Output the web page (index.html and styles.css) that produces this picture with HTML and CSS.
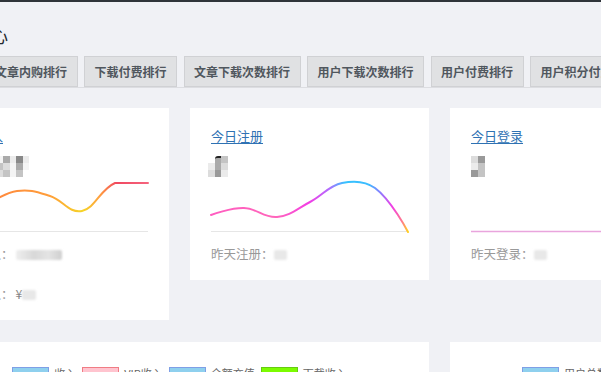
FILE: index.html
```html
<!DOCTYPE html>
<html lang="zh-CN">
<head>
<meta charset="utf-8">
<title>数据中心</title>
<link rel="stylesheet" href="styles.css">
</head>
<body>
<div class="adminbar"></div>
<div class="wrap">
  <h1 class="title">数据中心</h1>
  <nav class="tabs">
    <a class="tab" href="#">概况</a>
    <a class="tab" href="#">文章内购排行</a>
    <a class="tab" href="#">下载付费排行</a>
    <a class="tab" href="#">文章下载次数排行</a>
    <a class="tab" href="#">用户下载次数排行</a>
    <a class="tab" href="#">用户付费排行</a>
    <a class="tab" href="#">用户积分付费排行</a>
  </nav>

  <section class="stats">
    <article class="card">
      <a class="card-link" href="#">今日收入</a>
      <div class="mosaic mosaic-12">
        <i class="s3"></i><i class="s1"></i><i class="s4"></i><i class="s2"></i><i class="s3"></i><i class="s1"></i><i class="s4"></i><i class="s6"></i><i class="s2"></i><i class="s5"></i><i class="d1"></i><i class="s5"></i>
        <i class="s4"></i><i class="s2"></i><i class="s3"></i><i class="s1"></i><i class="s4"></i><i class="s2"></i><i class="s5"></i><i class="s3"></i><i class="s4"></i><i class="s6"></i><i class="s2"></i><i class="s6"></i>
        <i class="s5"></i><i class="s3"></i><i class="s5"></i><i class="s4"></i><i class="s2"></i><i class="s5"></i><i class="s3"></i><i class="s4"></i><i class="s3"></i><i class="s6"></i><i class="s3"></i><i class="s0"></i>
      </div>
      <svg class="spark" viewBox="0 0 197 56" width="197" height="56">
        <defs>
          <linearGradient id="g1" gradientUnits="userSpaceOnUse" x1="0" y1="0" x2="197" y2="0">
            <stop offset="0" stop-color="#ff7f45"/>
            <stop offset="0.25" stop-color="#ff8a3d"/>
            <stop offset="0.5" stop-color="#ff9e3a"/>
            <stop offset="0.67" stop-color="#f6d527"/>
            <stop offset="0.76" stop-color="#ff9a40"/>
            <stop offset="0.84" stop-color="#f04860"/>
            <stop offset="1" stop-color="#f5647e"/>
          </linearGradient>
        </defs>
        <line x1="0" y1="54.5" x2="197" y2="54.5" class="base"/>
        <path d="M0,38 C0,38 19.8,32.8 33,28 C46.2,23.2 52.8,15.8 66,14 C79.2,12.2 86,15 99,19 C112,23 118,36.6 131,34 C144,31.4 149,12.4 164,6 C175.4,6 197,6 197,6" class="line" stroke="url(#g1)"/>
      </svg>
      <p class="meta">昨天收入：<span class="blur blur-wide"></span></p>
      <p class="meta">累计收入：<span class="yen">¥</span><span class="blur blur-short"></span></p>
    </article>

    <article class="card">
      <a class="card-link" href="#">今日注册</a>
      <div class="mosaic mosaic-3 shift">
        <i class="s0"></i><i class="s2 mark"></i><i class="s3"></i>
        <i class="s5"></i><i class="s2"></i><i class="s4"></i>
        <i class="s4"></i><i class="s1"></i><i class="s5"></i>
      </div>
      <svg class="spark" viewBox="0 0 197 56" width="197" height="56">
        <defs>
          <linearGradient id="g2" gradientUnits="userSpaceOnUse" x1="0" y1="0" x2="197" y2="0">
            <stop offset="0" stop-color="#ff5cc0"/>
            <stop offset="0.33" stop-color="#ff66bb"/>
            <stop offset="0.5" stop-color="#f23de5"/>
            <stop offset="0.6" stop-color="#b06cff"/>
            <stop offset="0.68" stop-color="#36c2ff"/>
            <stop offset="0.8" stop-color="#3cbcff"/>
            <stop offset="0.86" stop-color="#8a7cff"/>
            <stop offset="0.92" stop-color="#f23de5"/>
            <stop offset="0.97" stop-color="#ff7a8a"/>
            <stop offset="1" stop-color="#ffd21f"/>
          </linearGradient>
        </defs>
        <line x1="0" y1="54.5" x2="197" y2="54.5" class="base"/>
        <path d="M0,38 C0,38 19.8,30.6 33,31 C46.2,31.4 52.8,41.2 66,40 C79.2,38.8 86,31.8 99,25 C112,18.2 117.3,8.9 131,6 C143.3,3.4 154,3.6 164,11 C180.4,23.2 197,55 197,55" class="line" stroke="url(#g2)"/>
      </svg>
      <p class="meta">昨天注册：<span class="blur blur-tiny"></span></p>
    </article>

    <article class="card">
      <a class="card-link" href="#">今日登录</a>
      <div class="mosaic mosaic-2">
        <i class="s4"></i><i class="s1"></i>
        <i class="s5"></i><i class="s3"></i>
        <i class="s1"></i><i class="s3"></i>
      </div>
      <svg class="spark" viewBox="0 0 197 56" width="197" height="56">
        <line x1="0" y1="54.5" x2="197" y2="54.5" class="base"/>
        <line x1="0" y1="54.5" x2="197" y2="54.5" class="flat"/>
      </svg>
      <p class="meta">昨天登录：<span class="blur blur-tiny"></span></p>
    </article>
  </section>

  <section class="charts">
    <article class="card chart-card">
      <ul class="legend">
        <li><span class="swatch sw-blue"></span>收入</li>
        <li><span class="swatch sw-pink"></span>VIP收入</li>
        <li><span class="swatch sw-blue"></span>余额充值</li>
        <li><span class="swatch sw-lime"></span>下载收入</li>
      </ul>
    </article>
    <article class="card chart-card">
      <ul class="legend legend-shift">
        <li><span class="swatch sw-blue"></span>用户总数</li>
      </ul>
    </article>
  </section>
</div>
</body>
</html>
```

FILE: styles.css
```css
html, body {
  margin: 0;
  padding: 0;
}

body {
  width: 601px;
  height: 372px;
  overflow: hidden;
  background: #f0f1f5;
  font-family: "Noto Sans CJK SC", "Noto Sans", "Liberation Sans", sans-serif;
  color: #23282d;
}

.adminbar {
  height: 2px;
  background: #2f3439;
}

.wrap {
  margin-left: -70px;
  width: 780px;
}

.title {
  margin: 24px 0 12px 6px;
  font-size: 18px;
  line-height: 18px;
  font-weight: 400;
  color: #23282d;
}

.tabs {
  display: flex;
  gap: 6.5px;
  padding-left: 3px;
  border-bottom: 1px solid #dcdde1;
}

.tab {
  flex: none;
  padding: 0 9.5px;
  border: 1px solid #d0d1d4;
  background: #e0e1e3;
  color: #50575e;
  font-size: 12px;
  font-weight: 700;
  line-height: 29px;
  text-decoration: none;
  white-space: nowrap;
}

.stats {
  display: grid;
  grid-template-columns: repeat(3, 239px);
  gap: 21px;
  margin-top: 20px;
  align-items: start;
}

.card {
  background: #fff;
  padding: 20px 21px 16px;
}

.card-link {
  display: block;
  width: fit-content;
  font-size: 13px;
  line-height: 16px;
  color: #2f72b3;
  text-decoration: underline;
  text-underline-offset: 2px;
}

.mosaic {
  display: grid;
  grid-template-rows: repeat(3, 7px);
  margin-top: 12px;
  height: 21px;
}

.mosaic-12 { grid-template-columns: repeat(12, 6.5px); }
.mosaic-3 { grid-template-columns: repeat(3, 6.5px); }
.mosaic-2 { grid-template-columns: repeat(2, 7px); }
.shift { margin-left: -3px; }

.mosaic i { display: block; }
.s0 { background: #ffffff; }
.s1 { background: #999999; }
.s2 { background: #aaaaaa; }
.s3 { background: #c4c4c4; }
.s4 { background: #dcdcdc; }
.s5 { background: #ebebeb; }
.s6 { background: #f4f4f4; }
.d1 { background: #888888; }
.mark { border-top: 2px solid #222; border-radius: 3px 0 0 0; }

.spark {
  display: block;
  overflow: visible;
}

.base {
  stroke: #e6e6e6;
  stroke-width: 1;
}

.line {
  fill: none;
  stroke-width: 2;
  stroke-linecap: round;
  stroke-linejoin: round;
}

.flat {
  stroke: #e9a5dd;
  stroke-width: 1.5;
}

.meta {
  margin: 11px 0 0;
  font-size: 12.5px;
  line-height: 20px;
  color: #999;
  white-space: nowrap;
}

.meta + .meta {
  margin-top: 20px;
}

.yen {
  margin-left: 2px;
  color: #888;
}

.blur {
  display: inline-block;
  height: 10px;
  vertical-align: -1px;
  border-radius: 2px;
  background: #e8e8e8;
  filter: blur(1px);
}

.blur-wide {
  width: 46px;
  margin-left: 2px;
  background: linear-gradient(90deg, #eeeeee 0%, #d8d8d8 40%, #e4e4e4 70%, #cfcfcf 100%);
}

.blur-short { width: 14px; }
.blur-tiny { width: 13px; }

.charts {
  display: grid;
  grid-template-columns: 499px 239px;
  gap: 21px;
  margin-top: 22px;
}

.chart-card {
  padding: 25px 0 0;
  height: 80px;
}

.legend {
  display: flex;
  justify-content: center;
  gap: 6px;
  margin: 0;
  padding: 0;
  list-style: none;
  font-size: 11px;
  line-height: 12px;
  color: #666;
}

.legend-shift {
  padding-right: 9px;
}

.legend li {
  display: flex;
  align-items: center;
  gap: 5px;
}

.swatch {
  display: block;
  width: 37px;
  height: 12px;
  box-sizing: border-box;
  border: 1px solid;
}

.sw-blue { background: #8fd0ee; border-color: #7f9fe6; }
.sw-pink { background: #ffc4cf; border-color: #f07c84; }
.sw-lime { background: #7cfc00; border-color: #66cc11; }
```
